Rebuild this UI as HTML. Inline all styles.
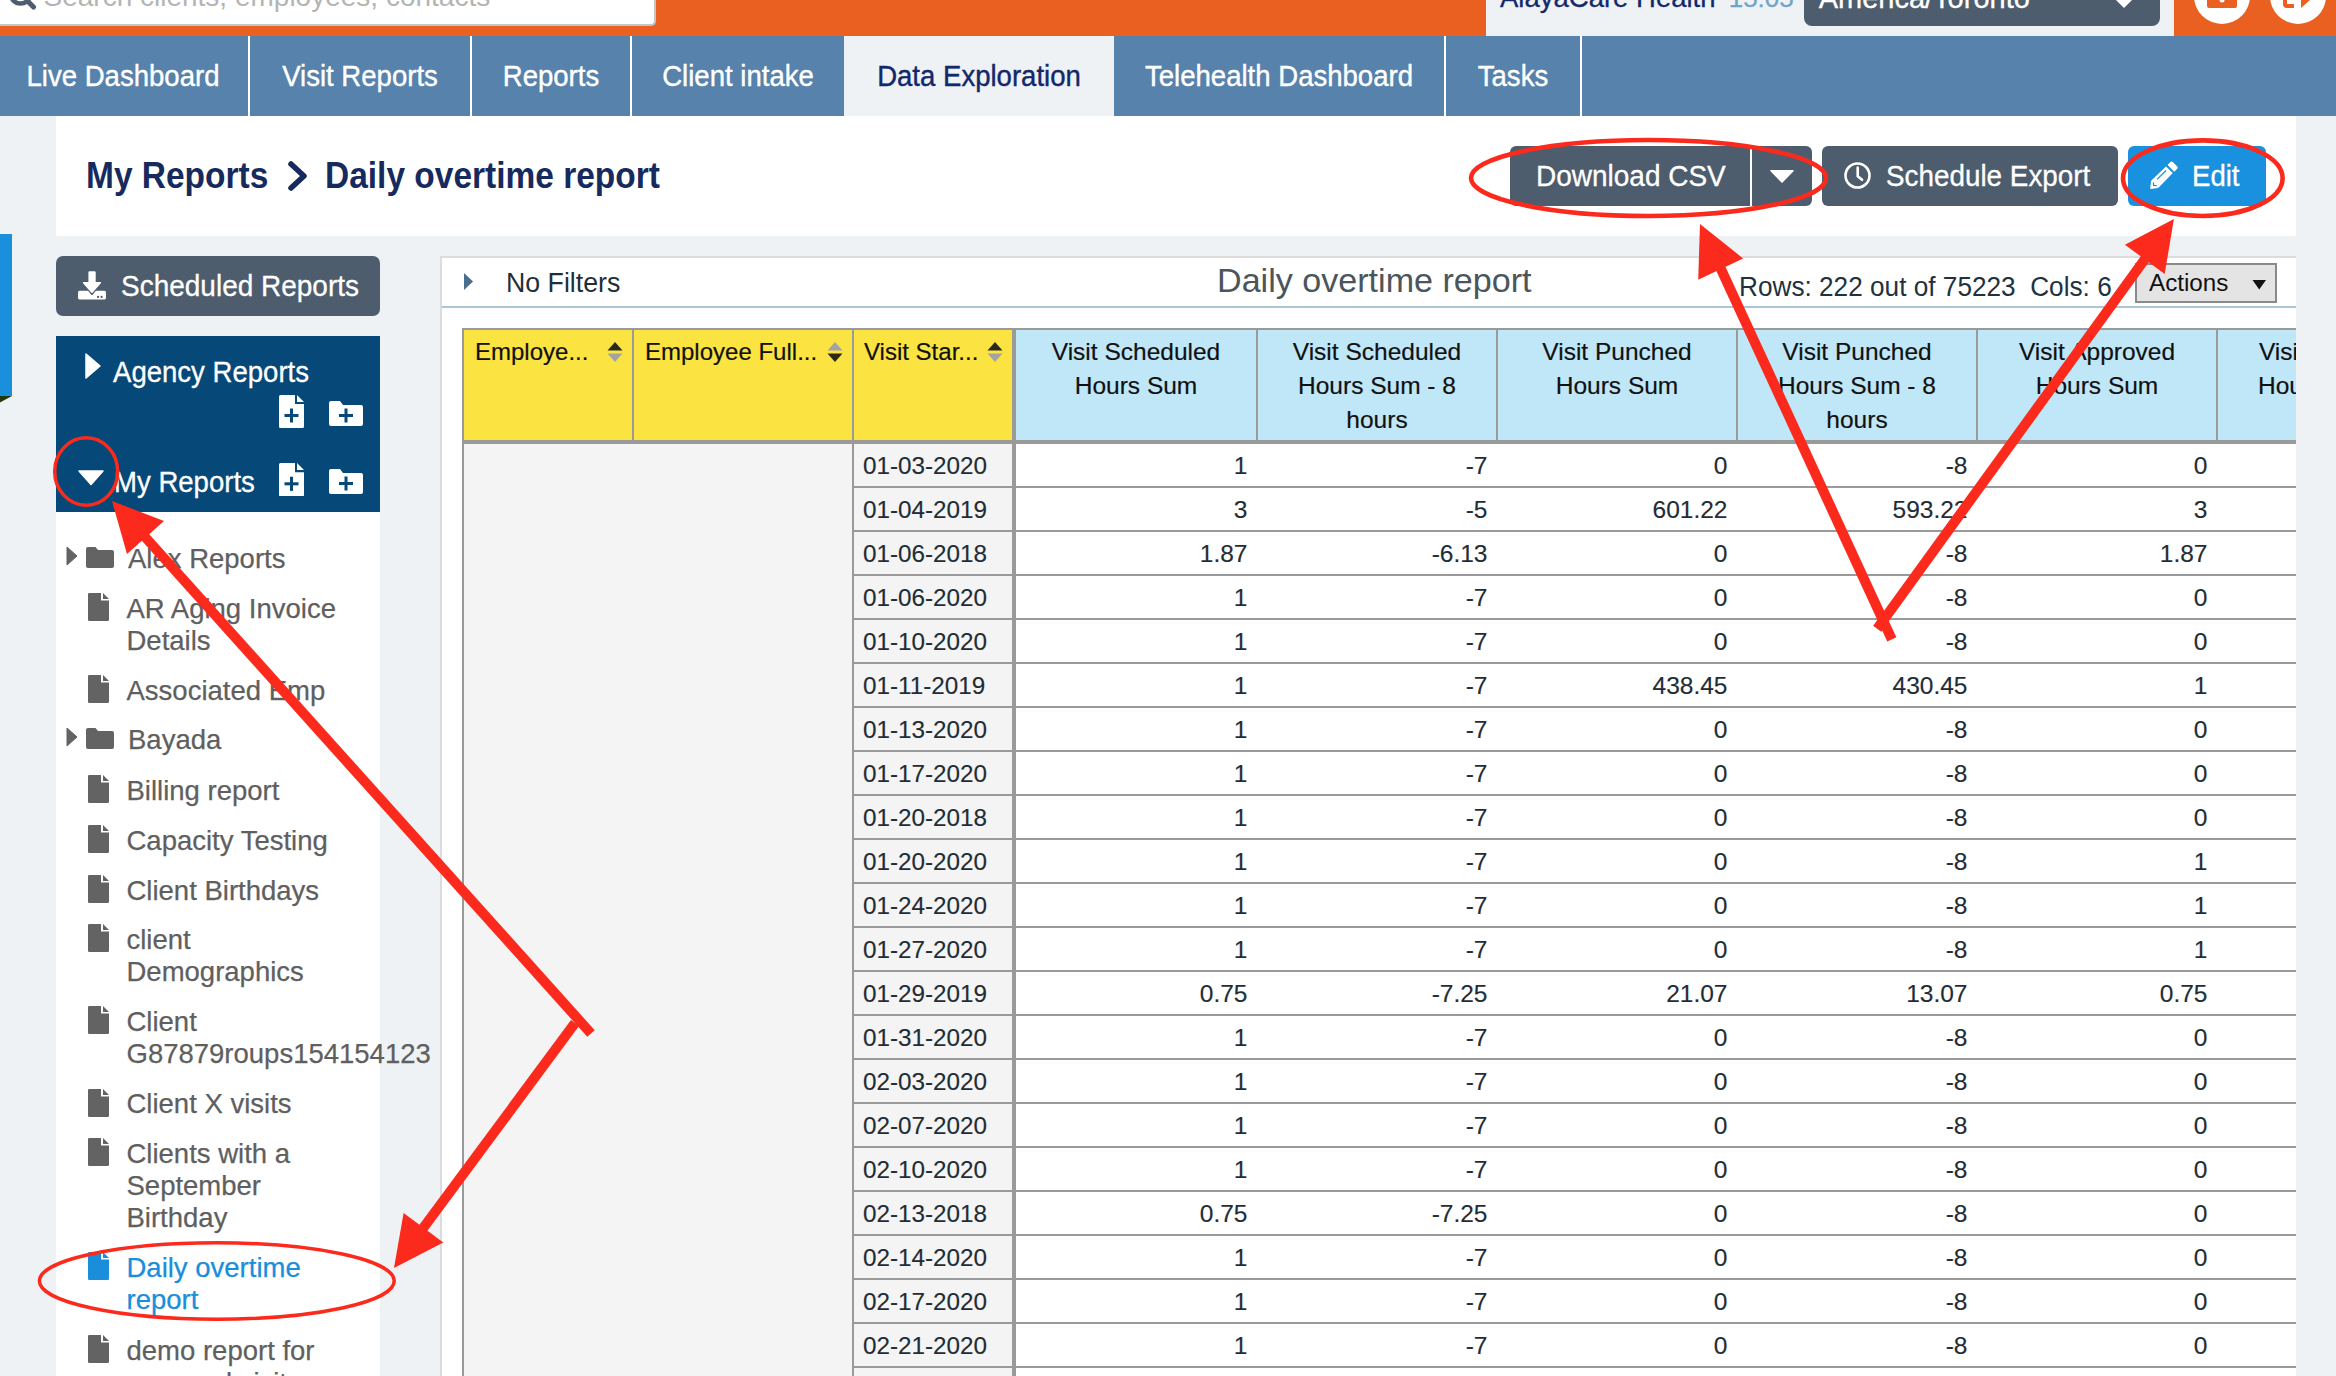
<!DOCTYPE html>
<html><head><meta charset="utf-8"><title>Daily overtime report</title>
<style>
html,body{margin:0;padding:0;}
body{width:2336px;height:1376px;overflow:hidden;position:relative;background:#eef2f5;font-family:"Liberation Sans",sans-serif;}
body div, body svg{position:absolute;}
body div div, body div svg{position:absolute;}
</style></head><body>
<div style="left:0px;top:0px;width:2336px;height:36px;background:#ea6020;"></div>
<div style="left:0;top:-12px;width:654px;height:35.5px;background:#fff;border:2px solid #c3c6c9;border-top:none;border-left:none;border-radius:0 0 5px 0;"></div>
<svg style="left:0;top:0" width="60" height="30"><circle cx="20.5" cy="-6.5" r="10" fill="none" stroke="#4e5d6e" stroke-width="4.5"/><line x1="27.5" y1="1" x2="33.5" y2="7" stroke="#4e5d6e" stroke-width="5" stroke-linecap="round"/></svg>
<div style="top:-17.30px;font-size:28px;line-height:28px;color:#b4b4b4;font-weight:400;white-space:pre;left:43.5px;">Search clients, employees, contacts</div>
<div style="left:1486px;top:0px;width:688px;height:36px;background:#eef2f5;"></div>
<div style="top:-15.88px;font-size:27.5px;line-height:27.5px;color:#13286a;font-weight:400;white-space:pre;left:1500px;-webkit-text-stroke:0.3px">AlayaCare Health</div>
<div style="top:-14.60px;font-size:26px;line-height:26px;color:#70a4c9;font-weight:400;white-space:pre;left:1728.7px;-webkit-text-stroke:0.3px">15:05</div>
<div style="left:1804px;top:-10px;width:356px;height:36px;background:#4e5d6e;border-radius:0 0 8px 8px;"></div>
<div style="top:-16.15px;font-size:29px;line-height:29px;color:#fff;font-weight:400;white-space:pre;left:1818.7px;-webkit-text-stroke:0.3px">America/Toronto</div>
<svg style="left:2110px;top:0" width="30" height="12"><polygon points="2,-4 14,8 26,-4 22,-8 14,0 6,-8" fill="#fff"/></svg>
<svg style="left:2180px;top:0" width="156" height="36"><circle cx="42" cy="-4" r="28" fill="#fff"/><circle cx="118" cy="-4" r="28" fill="#fff"/><rect x="27" y="-12" width="30" height="20" rx="2" fill="#ea6020"/><circle cx="42" cy="0" r="2.5" fill="#fff"/><path d="M103 -6 L103 4 Q103 8 107 8 L114 8 L114 4 L107 4 L107 -6 Z" fill="#ea6020"/><path d="M112 -10 L130 -10 L130 0 L121 8 L121 0 L112 0 Z" fill="#ea6020"/></svg>
<div style="left:0px;top:36px;width:2336px;height:80px;background:#5682ab;"></div>
<div style="left:248px;top:36px;width:2px;height:80px;background:#fff;"></div>
<div style="left:470px;top:36px;width:2px;height:80px;background:#fff;"></div>
<div style="left:630px;top:36px;width:2px;height:80px;background:#fff;"></div>
<div style="left:1444px;top:36px;width:2px;height:80px;background:#fff;"></div>
<div style="left:1580px;top:36px;width:2px;height:80px;background:#fff;"></div>
<div style="left:844px;top:36px;width:270px;height:80px;background:#eef2f5;"></div>
<div style="top:62.35px;font-size:29px;line-height:29px;color:#fff;font-weight:400;white-space:pre;left:-277.5px;width:800px;text-align:center;transform:scaleX(0.95);transform-origin:center top;-webkit-text-stroke:0.4px">Live Dashboard</div>
<div style="top:62.35px;font-size:29px;line-height:29px;color:#fff;font-weight:400;white-space:pre;left:-40px;width:800px;text-align:center;transform:scaleX(0.95);transform-origin:center top;-webkit-text-stroke:0.4px">Visit Reports</div>
<div style="top:62.35px;font-size:29px;line-height:29px;color:#fff;font-weight:400;white-space:pre;left:151px;width:800px;text-align:center;transform:scaleX(0.95);transform-origin:center top;-webkit-text-stroke:0.4px">Reports</div>
<div style="top:62.35px;font-size:29px;line-height:29px;color:#fff;font-weight:400;white-space:pre;left:338px;width:800px;text-align:center;transform:scaleX(0.95);transform-origin:center top;-webkit-text-stroke:0.4px">Client intake</div>
<div style="top:62.35px;font-size:29px;line-height:29px;color:#13286a;font-weight:400;white-space:pre;left:579px;width:800px;text-align:center;transform:scaleX(0.95);transform-origin:center top;-webkit-text-stroke:0.4px">Data Exploration</div>
<div style="top:62.35px;font-size:29px;line-height:29px;color:#fff;font-weight:400;white-space:pre;left:879px;width:800px;text-align:center;transform:scaleX(0.95);transform-origin:center top;-webkit-text-stroke:0.4px">Telehealth Dashboard</div>
<div style="top:62.35px;font-size:29px;line-height:29px;color:#fff;font-weight:400;white-space:pre;left:1113px;width:800px;text-align:center;transform:scaleX(0.95);transform-origin:center top;-webkit-text-stroke:0.4px">Tasks</div>
<div style="left:56px;top:116px;width:2240px;height:120px;background:#fff;"></div>
<div style="top:158.40px;font-size:36px;line-height:36px;color:#172a5e;font-weight:700;white-space:pre;left:85.8px;transform:scaleX(0.93);transform-origin:left top;">My Reports</div>
<svg style="left:280px;top:155px" width="40" height="45"><polyline points="11,9 24,21 11,33" fill="none" stroke="#172a5e" stroke-width="5.5" stroke-linecap="round" stroke-linejoin="round"/></svg>
<div style="top:158.40px;font-size:36px;line-height:36px;color:#172a5e;font-weight:700;white-space:pre;left:325px;transform:scaleX(0.93);transform-origin:left top;">Daily overtime report</div>
<div style="left:1510px;top:146px;width:302px;height:60px;background:#4e5d6e;border-radius:6px;"></div>
<div style="left:1750px;top:148px;width:2px;height:58px;background:#fff;"></div>
<div style="top:162.05px;font-size:29px;line-height:29px;color:#fff;font-weight:400;white-space:pre;left:1535.5px;transform:scaleX(0.965);transform-origin:left top;-webkit-text-stroke:0.3px">Download CSV</div>
<svg style="left:1765px;top:165px" width="34" height="24"><polygon points="6,5.8 28,5.8 17,17" fill="#fff" stroke="#fff" stroke-width="1.6" stroke-linejoin="round"/></svg>
<div style="left:1822px;top:146px;width:296px;height:60px;background:#4e5d6e;border-radius:6px;"></div>
<svg style="left:1840px;top:158px" width="36" height="36"><circle cx="17.5" cy="17.5" r="12" fill="none" stroke="#fff" stroke-width="2.6"/><polyline points="17.7,9.6 17.7,18.2 22,21.8" fill="none" stroke="#fff" stroke-width="2.6" stroke-linecap="round" stroke-linejoin="round"/></svg>
<div style="top:162.05px;font-size:29px;line-height:29px;color:#fff;font-weight:400;white-space:pre;left:1886px;transform:scaleX(0.96);transform-origin:left top;-webkit-text-stroke:0.3px">Schedule Export</div>
<div style="left:2128px;top:146px;width:138px;height:60px;background:#1a91de;border-radius:6px;"></div>
<svg style="left:2149.7px;top:161.3px" width="30" height="30"><path d="M16 5.6 L22.8 12.1 L8.7 26.6 Q8.2 27 7.6 27.1 L1 28 Q0.1 28 0.2 27.1 L1.1 20.3 Q1.2 19.7 1.6 19.3 Z" fill="#fff"/><path d="M17.6 3.9 L20.4 1.1 Q21.6 -0.1 22.8 1.1 L27.2 5.4 Q28.3 6.6 27.2 7.8 L24.3 10.7 Z" fill="#fff"/><line x1="7" y1="18.4" x2="16" y2="9.5" stroke="#1a91de" stroke-width="1.3"/><polyline points="3.4,21.4 3.6,24.4 6.7,24.6" fill="none" stroke="#1a91de" stroke-width="1.3"/></svg>
<div style="top:162.05px;font-size:29px;line-height:29px;color:#fff;font-weight:400;white-space:pre;left:2191.5px;transform:scaleX(0.95);transform-origin:left top;-webkit-text-stroke:0.3px">Edit</div>
<div style="left:0px;top:234px;width:12px;height:162px;background:#1a8fdc;"></div>
<svg style="left:0;top:396px" width="14" height="12"><polygon points="0,0 12,0 0,6.5" fill="#1f3812"/></svg>
<div style="left:56px;top:256px;width:324px;height:60px;background:#4e5d6e;border-radius:7px;"></div>
<svg style="left:76px;top:268px" width="34" height="36"><rect x="2" y="22.7" width="28" height="8.7" rx="1.6" fill="#fff"/><polygon points="4.6,12.9 27.3,12.9 15.95,26.9" fill="#4e5d6e" stroke="#4e5d6e" stroke-width="1" stroke-linejoin="round"/><rect x="12.4" y="3.2" width="7.3" height="12" rx="1.2" fill="#fff"/><polygon points="7.6,14.8 24.3,14.8 15.95,24.2" fill="#fff" stroke="#fff" stroke-width="1.6" stroke-linejoin="round"/><circle cx="22.1" cy="28.9" r="1.1" fill="#4e5d6e"/><circle cx="25.6" cy="28.9" r="1.1" fill="#4e5d6e"/></svg>
<div style="top:272.35px;font-size:29px;line-height:29px;color:#fff;font-weight:400;white-space:pre;left:120.5px;transform:scaleX(0.965);transform-origin:left top;-webkit-text-stroke:0.3px">Scheduled Reports</div>
<div style="left:56px;top:336px;width:324px;height:176px;background:#064877;"></div>
<svg style="left:84px;top:352px" width="20" height="30"><polygon points="2,2 16,14 2,26" fill="#fff" stroke="#fff" stroke-width="1.5" stroke-linejoin="round"/></svg>
<div style="top:357.95px;font-size:29px;line-height:29px;color:#fff;font-weight:400;white-space:pre;left:113px;transform:scaleX(0.95);transform-origin:left top;-webkit-text-stroke:0.3px">Agency Reports</div>
<svg style="left:279px;top:395px" width="25" height="33" viewBox="0 0 25 33" preserveAspectRatio="none"><path d="M1.5 0 L16 0 L16 9 L25 9 L25 31.5 Q25 33 23.5 33 L1.5 33 Q0 33 0 31.5 L0 1.5 Q0 0 1.5 0 Z" fill="#fff"/><polygon points="18,0 25,7 18,7" fill="#fff"/><rect x="5.5" y="19" width="14" height="3" fill="#064877"/><rect x="11" y="13.5" width="3" height="14" fill="#064877"/></svg>
<svg style="left:329px;top:401px" width="34" height="25" viewBox="0 0 34 25" preserveAspectRatio="none"><path d="M2 0 L11 0 L14 4 L32 4 Q34 4 34 6 L34 23 Q34 25 32 25 L2 25 Q0 25 0 23 L0 2 Q0 0 2 0 Z" fill="#fff"/><rect x="10" y="13" width="14" height="3" fill="#064877"/><rect x="15.5" y="7.5" width="3" height="14" fill="#064877"/></svg>
<svg style="left:76px;top:468px" width="30" height="20"><polygon points="3,3 27,3 15,16.5" fill="#fff" stroke="#fff" stroke-width="1.5" stroke-linejoin="round"/></svg>
<div style="top:467.55px;font-size:29px;line-height:29px;color:#fff;font-weight:400;white-space:pre;left:114px;transform:scaleX(0.95);transform-origin:left top;-webkit-text-stroke:0.3px">My Reports</div>
<svg style="left:279px;top:462.5px" width="25" height="33.5" viewBox="0 0 25 33" preserveAspectRatio="none"><path d="M1.5 0 L16 0 L16 9 L25 9 L25 31.5 Q25 33 23.5 33 L1.5 33 Q0 33 0 31.5 L0 1.5 Q0 0 1.5 0 Z" fill="#fff"/><polygon points="18,0 25,7 18,7" fill="#fff"/><rect x="5.5" y="19" width="14" height="3" fill="#064877"/><rect x="11" y="13.5" width="3" height="14" fill="#064877"/></svg>
<svg style="left:329px;top:469px" width="34" height="25" viewBox="0 0 34 25" preserveAspectRatio="none"><path d="M2 0 L11 0 L14 4 L32 4 Q34 4 34 6 L34 23 Q34 25 32 25 L2 25 Q0 25 0 23 L0 2 Q0 0 2 0 Z" fill="#fff"/><rect x="10" y="13" width="14" height="3" fill="#064877"/><rect x="15.5" y="7.5" width="3" height="14" fill="#064877"/></svg>
<div style="left:56px;top:512px;width:324px;height:864px;background:#fff;"></div>
<svg style="left:66px;top:546px" width="14" height="22"><polygon points="1,1 11,10 1,19" fill="#636363" stroke="#636363" stroke-width="1" stroke-linejoin="round"/></svg>
<svg style="left:86px;top:547px" width="28" height="21" viewBox="0 0 28 21"><path d="M2 0 L9.5 0 L12 3 L26 3 Q28 3 28 5 L28 19 Q28 21 26 21 L2 21 Q0 21 0 19 L0 2 Q0 0 2 0 Z" fill="#636363"/></svg>
<div style="top:544.62px;font-size:27.5px;line-height:27.5px;color:#5f5f5f;font-weight:400;white-space:pre;left:128px;-webkit-text-stroke:0.25px">Alex Reports</div>
<svg style="left:88px;top:593px" width="21" height="28" viewBox="0 0 21 28"><path d="M1.2 0 L13 0 L13 7.5 L21 7.5 L21 26.8 Q21 28 19.8 28 L1.2 28 Q0 28 0 26.8 L0 1.2 Q0 0 1.2 0 Z" fill="#636363"/><polygon points="15,0 21,6 15,6" fill="#636363"/></svg>
<div style="top:594.62px;font-size:27.5px;line-height:27.5px;color:#5f5f5f;font-weight:400;white-space:pre;left:126.5px;-webkit-text-stroke:0.25px">AR Aging Invoice</div>
<div style="top:626.62px;font-size:27.5px;line-height:27.5px;color:#5f5f5f;font-weight:400;white-space:pre;left:126.5px;-webkit-text-stroke:0.25px">Details</div>
<svg style="left:88px;top:675px" width="21" height="28" viewBox="0 0 21 28"><path d="M1.2 0 L13 0 L13 7.5 L21 7.5 L21 26.8 Q21 28 19.8 28 L1.2 28 Q0 28 0 26.8 L0 1.2 Q0 0 1.2 0 Z" fill="#636363"/><polygon points="15,0 21,6 15,6" fill="#636363"/></svg>
<div style="top:676.62px;font-size:27.5px;line-height:27.5px;color:#5f5f5f;font-weight:400;white-space:pre;left:126.5px;-webkit-text-stroke:0.25px">Associated Emp</div>
<svg style="left:66px;top:727px" width="14" height="22"><polygon points="1,1 11,10 1,19" fill="#636363" stroke="#636363" stroke-width="1" stroke-linejoin="round"/></svg>
<svg style="left:86px;top:728px" width="28" height="21" viewBox="0 0 28 21"><path d="M2 0 L9.5 0 L12 3 L26 3 Q28 3 28 5 L28 19 Q28 21 26 21 L2 21 Q0 21 0 19 L0 2 Q0 0 2 0 Z" fill="#636363"/></svg>
<div style="top:725.62px;font-size:27.5px;line-height:27.5px;color:#5f5f5f;font-weight:400;white-space:pre;left:128px;-webkit-text-stroke:0.25px">Bayada</div>
<svg style="left:88px;top:775px" width="21" height="28" viewBox="0 0 21 28"><path d="M1.2 0 L13 0 L13 7.5 L21 7.5 L21 26.8 Q21 28 19.8 28 L1.2 28 Q0 28 0 26.8 L0 1.2 Q0 0 1.2 0 Z" fill="#636363"/><polygon points="15,0 21,6 15,6" fill="#636363"/></svg>
<div style="top:776.62px;font-size:27.5px;line-height:27.5px;color:#5f5f5f;font-weight:400;white-space:pre;left:126.5px;-webkit-text-stroke:0.25px">Billing report</div>
<svg style="left:88px;top:825px" width="21" height="28" viewBox="0 0 21 28"><path d="M1.2 0 L13 0 L13 7.5 L21 7.5 L21 26.8 Q21 28 19.8 28 L1.2 28 Q0 28 0 26.8 L0 1.2 Q0 0 1.2 0 Z" fill="#636363"/><polygon points="15,0 21,6 15,6" fill="#636363"/></svg>
<div style="top:826.62px;font-size:27.5px;line-height:27.5px;color:#5f5f5f;font-weight:400;white-space:pre;left:126.5px;-webkit-text-stroke:0.25px">Capacity Testing</div>
<svg style="left:88px;top:875px" width="21" height="28" viewBox="0 0 21 28"><path d="M1.2 0 L13 0 L13 7.5 L21 7.5 L21 26.8 Q21 28 19.8 28 L1.2 28 Q0 28 0 26.8 L0 1.2 Q0 0 1.2 0 Z" fill="#636363"/><polygon points="15,0 21,6 15,6" fill="#636363"/></svg>
<div style="top:876.62px;font-size:27.5px;line-height:27.5px;color:#5f5f5f;font-weight:400;white-space:pre;left:126.5px;-webkit-text-stroke:0.25px">Client Birthdays</div>
<svg style="left:88px;top:924px" width="21" height="28" viewBox="0 0 21 28"><path d="M1.2 0 L13 0 L13 7.5 L21 7.5 L21 26.8 Q21 28 19.8 28 L1.2 28 Q0 28 0 26.8 L0 1.2 Q0 0 1.2 0 Z" fill="#636363"/><polygon points="15,0 21,6 15,6" fill="#636363"/></svg>
<div style="top:925.62px;font-size:27.5px;line-height:27.5px;color:#5f5f5f;font-weight:400;white-space:pre;left:126.5px;-webkit-text-stroke:0.25px">client</div>
<div style="top:957.62px;font-size:27.5px;line-height:27.5px;color:#5f5f5f;font-weight:400;white-space:pre;left:126.5px;-webkit-text-stroke:0.25px">Demographics</div>
<svg style="left:88px;top:1006px" width="21" height="28" viewBox="0 0 21 28"><path d="M1.2 0 L13 0 L13 7.5 L21 7.5 L21 26.8 Q21 28 19.8 28 L1.2 28 Q0 28 0 26.8 L0 1.2 Q0 0 1.2 0 Z" fill="#636363"/><polygon points="15,0 21,6 15,6" fill="#636363"/></svg>
<div style="top:1007.62px;font-size:27.5px;line-height:27.5px;color:#5f5f5f;font-weight:400;white-space:pre;left:126.5px;-webkit-text-stroke:0.25px">Client</div>
<div style="top:1039.62px;font-size:27.5px;line-height:27.5px;color:#5f5f5f;font-weight:400;white-space:pre;left:126.5px;-webkit-text-stroke:0.25px">G87879roups154154123</div>
<svg style="left:88px;top:1088.5px" width="21" height="28" viewBox="0 0 21 28"><path d="M1.2 0 L13 0 L13 7.5 L21 7.5 L21 26.8 Q21 28 19.8 28 L1.2 28 Q0 28 0 26.8 L0 1.2 Q0 0 1.2 0 Z" fill="#636363"/><polygon points="15,0 21,6 15,6" fill="#636363"/></svg>
<div style="top:1090.12px;font-size:27.5px;line-height:27.5px;color:#5f5f5f;font-weight:400;white-space:pre;left:126.5px;-webkit-text-stroke:0.25px">Client X visits</div>
<svg style="left:88px;top:1138px" width="21" height="28" viewBox="0 0 21 28"><path d="M1.2 0 L13 0 L13 7.5 L21 7.5 L21 26.8 Q21 28 19.8 28 L1.2 28 Q0 28 0 26.8 L0 1.2 Q0 0 1.2 0 Z" fill="#636363"/><polygon points="15,0 21,6 15,6" fill="#636363"/></svg>
<div style="top:1139.62px;font-size:27.5px;line-height:27.5px;color:#5f5f5f;font-weight:400;white-space:pre;left:126.5px;-webkit-text-stroke:0.25px">Clients with a</div>
<div style="top:1171.62px;font-size:27.5px;line-height:27.5px;color:#5f5f5f;font-weight:400;white-space:pre;left:126.5px;-webkit-text-stroke:0.25px">September</div>
<div style="top:1203.62px;font-size:27.5px;line-height:27.5px;color:#5f5f5f;font-weight:400;white-space:pre;left:126.5px;-webkit-text-stroke:0.25px">Birthday</div>
<svg style="left:88px;top:1252px" width="21" height="28" viewBox="0 0 21 28"><path d="M1.2 0 L13 0 L13 7.5 L21 7.5 L21 26.8 Q21 28 19.8 28 L1.2 28 Q0 28 0 26.8 L0 1.2 Q0 0 1.2 0 Z" fill="#1a8edb"/><polygon points="15,0 21,6 15,6" fill="#1a8edb"/></svg>
<div style="top:1253.62px;font-size:27.5px;line-height:27.5px;color:#1a8edb;font-weight:400;white-space:pre;left:126.5px;-webkit-text-stroke:0.25px">Daily overtime</div>
<div style="top:1285.62px;font-size:27.5px;line-height:27.5px;color:#1a8edb;font-weight:400;white-space:pre;left:126.5px;-webkit-text-stroke:0.25px">report</div>
<svg style="left:88px;top:1335px" width="21" height="28" viewBox="0 0 21 28"><path d="M1.2 0 L13 0 L13 7.5 L21 7.5 L21 26.8 Q21 28 19.8 28 L1.2 28 Q0 28 0 26.8 L0 1.2 Q0 0 1.2 0 Z" fill="#636363"/><polygon points="15,0 21,6 15,6" fill="#636363"/></svg>
<div style="top:1336.62px;font-size:27.5px;line-height:27.5px;color:#5f5f5f;font-weight:400;white-space:pre;left:126.5px;-webkit-text-stroke:0.25px">demo report for</div>
<div style="top:1368.62px;font-size:27.5px;line-height:27.5px;color:#5f5f5f;font-weight:400;white-space:pre;left:126.5px;-webkit-text-stroke:0.25px">                 </div>
<div style="top:1368.62px;font-size:27.5px;line-height:27.5px;color:#5f5f5f;font-weight:400;white-space:pre;left:126.5px;-webkit-text-stroke:0.25px">personal visits</div>
<div style="left:440px;top:256px;width:1856px;height:1200px;background:#fff;border-left:2px solid #dcdcdc;border-top:2px solid #dcdcdc;box-sizing:border-box;"></div>
<svg style="left:460px;top:270px" width="20" height="24"><polygon points="4,3 13,11.5 4,20" fill="#4a6f8e"/></svg>
<div style="top:270.05px;font-size:27px;line-height:27px;color:#1f2f3a;font-weight:400;white-space:pre;left:505.5px;transform:scaleX(0.99);transform-origin:left top;">No Filters</div>
<div style="top:262.60px;font-size:34px;line-height:34px;color:#4a555c;font-weight:400;white-space:pre;left:1216.5px;transform:scaleX(1.003);transform-origin:left top;">Daily overtime report</div>
<div style="top:273.65px;font-size:27px;line-height:27px;color:#22323c;font-weight:400;white-space:pre;left:1739px;transform:scaleX(0.97);transform-origin:left top;">Rows: 222 out of 75223  Cols: 6</div>
<div style="left:2134.5px;top:262.5px;width:142.5px;height:40px;box-sizing:border-box;background:#e4e4e4;border:2px solid #8a8a8a;"></div>
<div style="top:271.52px;font-size:23.5px;line-height:23.5px;color:#111;font-weight:400;white-space:pre;left:2148.5px;transform:scaleX(1.03);transform-origin:left top;">Actions</div>
<svg style="left:2248px;top:276px" width="24" height="18"><polygon points="4.5,4 18,4 11.2,13.5" fill="#111"/></svg>
<div style="left:442px;top:306px;width:1854px;height:2px;background:#a9c5d9;"></div>
<div style="left:0;top:0;width:2296px;height:1376px;overflow:hidden;">
<div style="left:462px;top:328px;width:2034px;height:2px;background:#9a9a9a;"></div>
<div style="left:462px;top:328px;width:2px;height:1048px;background:#9a9a9a;"></div>
<div style="left:464px;top:330px;width:548px;height:110px;background:#fbe342;"></div>
<div style="left:1016px;top:330px;width:1480px;height:110px;background:#c0e7f7;"></div>
<div style="left:632px;top:330px;width:2px;height:1046px;background:#9a9a9a;"></div>
<div style="left:852px;top:330px;width:2px;height:1046px;background:#9a9a9a;"></div>
<div style="left:1012px;top:330px;width:4px;height:1046px;background:#9a9a9a;"></div>
<div style="left:1256px;top:330px;width:2px;height:110px;background:#9a9a9a;"></div>
<div style="left:1496px;top:330px;width:2px;height:110px;background:#9a9a9a;"></div>
<div style="left:1736px;top:330px;width:2px;height:110px;background:#9a9a9a;"></div>
<div style="left:1976px;top:330px;width:2px;height:110px;background:#9a9a9a;"></div>
<div style="left:2216px;top:330px;width:2px;height:110px;background:#9a9a9a;"></div>
<div style="left:462px;top:440px;width:2100px;height:4px;background:#9a9a9a;"></div>
<div style="left:464px;top:444px;width:388px;height:932px;background:#f4f4f4;"></div>
<div style="left:854px;top:444px;width:158px;height:932px;background:#f4f4f4;"></div>
<div style="left:1016px;top:444px;width:1500px;height:932px;background:#fff;"></div>
<div style="top:339.98px;font-size:24.5px;line-height:24.5px;color:#111;font-weight:400;white-space:pre;left:475px;transform:scaleX(0.98);transform-origin:left top;-webkit-text-stroke:0.2px">Employe...</div>
<svg style="left:607px;top:341px" width="16" height="22"><polygon points="0.5,9.5 15.5,9.5 8,1" fill="#2b2a1a"/><polygon points="0.5,12.5 15.5,12.5 8,21" fill="#a3a3a3"/></svg>
<div style="top:339.98px;font-size:24.5px;line-height:24.5px;color:#111;font-weight:400;white-space:pre;left:645px;transform:scaleX(0.98);transform-origin:left top;-webkit-text-stroke:0.2px">Employee Full...</div>
<svg style="left:827px;top:341px" width="16" height="22"><polygon points="0.5,9.5 15.5,9.5 8,1" fill="#a3a3a3"/><polygon points="0.5,12.5 15.5,12.5 8,21" fill="#2b2a1a"/></svg>
<div style="top:339.98px;font-size:24.5px;line-height:24.5px;color:#111;font-weight:400;white-space:pre;left:863.6px;transform:scaleX(0.98);transform-origin:left top;-webkit-text-stroke:0.2px">Visit Star...</div>
<svg style="left:987px;top:341px" width="16" height="22"><polygon points="0.5,9.5 15.5,9.5 8,1" fill="#2b2a1a"/><polygon points="0.5,12.5 15.5,12.5 8,21" fill="#a3a3a3"/></svg>
<div style="top:340.18px;font-size:24.5px;line-height:24.5px;color:#111;font-weight:400;white-space:pre;left:736px;width:800px;text-align:center;-webkit-text-stroke:0.2px">Visit Scheduled</div>
<div style="top:373.88px;font-size:24.5px;line-height:24.5px;color:#111;font-weight:400;white-space:pre;left:736px;width:800px;text-align:center;-webkit-text-stroke:0.2px">Hours Sum</div>
<div style="top:340.18px;font-size:24.5px;line-height:24.5px;color:#111;font-weight:400;white-space:pre;left:977px;width:800px;text-align:center;-webkit-text-stroke:0.2px">Visit Scheduled</div>
<div style="top:373.88px;font-size:24.5px;line-height:24.5px;color:#111;font-weight:400;white-space:pre;left:977px;width:800px;text-align:center;-webkit-text-stroke:0.2px">Hours Sum - 8</div>
<div style="top:407.57px;font-size:24.5px;line-height:24.5px;color:#111;font-weight:400;white-space:pre;left:977px;width:800px;text-align:center;-webkit-text-stroke:0.2px">hours</div>
<div style="top:340.18px;font-size:24.5px;line-height:24.5px;color:#111;font-weight:400;white-space:pre;left:1217px;width:800px;text-align:center;-webkit-text-stroke:0.2px">Visit Punched</div>
<div style="top:373.88px;font-size:24.5px;line-height:24.5px;color:#111;font-weight:400;white-space:pre;left:1217px;width:800px;text-align:center;-webkit-text-stroke:0.2px">Hours Sum</div>
<div style="top:340.18px;font-size:24.5px;line-height:24.5px;color:#111;font-weight:400;white-space:pre;left:1457px;width:800px;text-align:center;-webkit-text-stroke:0.2px">Visit Punched</div>
<div style="top:373.88px;font-size:24.5px;line-height:24.5px;color:#111;font-weight:400;white-space:pre;left:1457px;width:800px;text-align:center;-webkit-text-stroke:0.2px">Hours Sum - 8</div>
<div style="top:407.57px;font-size:24.5px;line-height:24.5px;color:#111;font-weight:400;white-space:pre;left:1457px;width:800px;text-align:center;-webkit-text-stroke:0.2px">hours</div>
<div style="top:340.18px;font-size:24.5px;line-height:24.5px;color:#111;font-weight:400;white-space:pre;left:1697px;width:800px;text-align:center;-webkit-text-stroke:0.2px">Visit Approved</div>
<div style="top:373.88px;font-size:24.5px;line-height:24.5px;color:#111;font-weight:400;white-space:pre;left:1697px;width:800px;text-align:center;-webkit-text-stroke:0.2px">Hours Sum</div>
<div style="top:340.18px;font-size:24.5px;line-height:24.5px;color:#111;font-weight:400;white-space:pre;left:1937px;width:800px;text-align:center;-webkit-text-stroke:0.2px">Visit Approved</div>
<div style="top:373.88px;font-size:24.5px;line-height:24.5px;color:#111;font-weight:400;white-space:pre;left:1937px;width:800px;text-align:center;-webkit-text-stroke:0.2px">Hours Sum - 8</div>
<div style="top:407.57px;font-size:24.5px;line-height:24.5px;color:#111;font-weight:400;white-space:pre;left:1937px;width:800px;text-align:center;-webkit-text-stroke:0.2px">hours</div>
<div style="left:854px;top:486px;width:2000px;height:2px;background:#9a9a9a;"></div>
<div style="top:453.68px;font-size:24.5px;line-height:24.5px;color:#1f2d36;font-weight:400;white-space:pre;left:862.5px;transform:scaleX(0.99);transform-origin:left top;-webkit-text-stroke:0.15px">01-03-2020</div>
<div style="top:453.68px;font-size:24.5px;line-height:24.5px;color:#1f2d36;font-weight:400;white-space:pre;left:647.5px;width:600px;text-align:right;-webkit-text-stroke:0.15px">1</div>
<div style="top:453.68px;font-size:24.5px;line-height:24.5px;color:#1f2d36;font-weight:400;white-space:pre;left:887.5px;width:600px;text-align:right;-webkit-text-stroke:0.15px">-7</div>
<div style="top:453.68px;font-size:24.5px;line-height:24.5px;color:#1f2d36;font-weight:400;white-space:pre;left:1127.5px;width:600px;text-align:right;-webkit-text-stroke:0.15px">0</div>
<div style="top:453.68px;font-size:24.5px;line-height:24.5px;color:#1f2d36;font-weight:400;white-space:pre;left:1367.5px;width:600px;text-align:right;-webkit-text-stroke:0.15px">-8</div>
<div style="top:453.68px;font-size:24.5px;line-height:24.5px;color:#1f2d36;font-weight:400;white-space:pre;left:1607.5px;width:600px;text-align:right;-webkit-text-stroke:0.15px">0</div>
<div style="left:854px;top:530px;width:2000px;height:2px;background:#9a9a9a;"></div>
<div style="top:497.68px;font-size:24.5px;line-height:24.5px;color:#1f2d36;font-weight:400;white-space:pre;left:862.5px;transform:scaleX(0.99);transform-origin:left top;-webkit-text-stroke:0.15px">01-04-2019</div>
<div style="top:497.68px;font-size:24.5px;line-height:24.5px;color:#1f2d36;font-weight:400;white-space:pre;left:647.5px;width:600px;text-align:right;-webkit-text-stroke:0.15px">3</div>
<div style="top:497.68px;font-size:24.5px;line-height:24.5px;color:#1f2d36;font-weight:400;white-space:pre;left:887.5px;width:600px;text-align:right;-webkit-text-stroke:0.15px">-5</div>
<div style="top:497.68px;font-size:24.5px;line-height:24.5px;color:#1f2d36;font-weight:400;white-space:pre;left:1127.5px;width:600px;text-align:right;-webkit-text-stroke:0.15px">601.22</div>
<div style="top:497.68px;font-size:24.5px;line-height:24.5px;color:#1f2d36;font-weight:400;white-space:pre;left:1367.5px;width:600px;text-align:right;-webkit-text-stroke:0.15px">593.22</div>
<div style="top:497.68px;font-size:24.5px;line-height:24.5px;color:#1f2d36;font-weight:400;white-space:pre;left:1607.5px;width:600px;text-align:right;-webkit-text-stroke:0.15px">3</div>
<div style="left:854px;top:574px;width:2000px;height:2px;background:#9a9a9a;"></div>
<div style="top:541.67px;font-size:24.5px;line-height:24.5px;color:#1f2d36;font-weight:400;white-space:pre;left:862.5px;transform:scaleX(0.99);transform-origin:left top;-webkit-text-stroke:0.15px">01-06-2018</div>
<div style="top:541.67px;font-size:24.5px;line-height:24.5px;color:#1f2d36;font-weight:400;white-space:pre;left:647.5px;width:600px;text-align:right;-webkit-text-stroke:0.15px">1.87</div>
<div style="top:541.67px;font-size:24.5px;line-height:24.5px;color:#1f2d36;font-weight:400;white-space:pre;left:887.5px;width:600px;text-align:right;-webkit-text-stroke:0.15px">-6.13</div>
<div style="top:541.67px;font-size:24.5px;line-height:24.5px;color:#1f2d36;font-weight:400;white-space:pre;left:1127.5px;width:600px;text-align:right;-webkit-text-stroke:0.15px">0</div>
<div style="top:541.67px;font-size:24.5px;line-height:24.5px;color:#1f2d36;font-weight:400;white-space:pre;left:1367.5px;width:600px;text-align:right;-webkit-text-stroke:0.15px">-8</div>
<div style="top:541.67px;font-size:24.5px;line-height:24.5px;color:#1f2d36;font-weight:400;white-space:pre;left:1607.5px;width:600px;text-align:right;-webkit-text-stroke:0.15px">1.87</div>
<div style="left:854px;top:618px;width:2000px;height:2px;background:#9a9a9a;"></div>
<div style="top:585.67px;font-size:24.5px;line-height:24.5px;color:#1f2d36;font-weight:400;white-space:pre;left:862.5px;transform:scaleX(0.99);transform-origin:left top;-webkit-text-stroke:0.15px">01-06-2020</div>
<div style="top:585.67px;font-size:24.5px;line-height:24.5px;color:#1f2d36;font-weight:400;white-space:pre;left:647.5px;width:600px;text-align:right;-webkit-text-stroke:0.15px">1</div>
<div style="top:585.67px;font-size:24.5px;line-height:24.5px;color:#1f2d36;font-weight:400;white-space:pre;left:887.5px;width:600px;text-align:right;-webkit-text-stroke:0.15px">-7</div>
<div style="top:585.67px;font-size:24.5px;line-height:24.5px;color:#1f2d36;font-weight:400;white-space:pre;left:1127.5px;width:600px;text-align:right;-webkit-text-stroke:0.15px">0</div>
<div style="top:585.67px;font-size:24.5px;line-height:24.5px;color:#1f2d36;font-weight:400;white-space:pre;left:1367.5px;width:600px;text-align:right;-webkit-text-stroke:0.15px">-8</div>
<div style="top:585.67px;font-size:24.5px;line-height:24.5px;color:#1f2d36;font-weight:400;white-space:pre;left:1607.5px;width:600px;text-align:right;-webkit-text-stroke:0.15px">0</div>
<div style="left:854px;top:662px;width:2000px;height:2px;background:#9a9a9a;"></div>
<div style="top:629.67px;font-size:24.5px;line-height:24.5px;color:#1f2d36;font-weight:400;white-space:pre;left:862.5px;transform:scaleX(0.99);transform-origin:left top;-webkit-text-stroke:0.15px">01-10-2020</div>
<div style="top:629.67px;font-size:24.5px;line-height:24.5px;color:#1f2d36;font-weight:400;white-space:pre;left:647.5px;width:600px;text-align:right;-webkit-text-stroke:0.15px">1</div>
<div style="top:629.67px;font-size:24.5px;line-height:24.5px;color:#1f2d36;font-weight:400;white-space:pre;left:887.5px;width:600px;text-align:right;-webkit-text-stroke:0.15px">-7</div>
<div style="top:629.67px;font-size:24.5px;line-height:24.5px;color:#1f2d36;font-weight:400;white-space:pre;left:1127.5px;width:600px;text-align:right;-webkit-text-stroke:0.15px">0</div>
<div style="top:629.67px;font-size:24.5px;line-height:24.5px;color:#1f2d36;font-weight:400;white-space:pre;left:1367.5px;width:600px;text-align:right;-webkit-text-stroke:0.15px">-8</div>
<div style="top:629.67px;font-size:24.5px;line-height:24.5px;color:#1f2d36;font-weight:400;white-space:pre;left:1607.5px;width:600px;text-align:right;-webkit-text-stroke:0.15px">0</div>
<div style="left:854px;top:706px;width:2000px;height:2px;background:#9a9a9a;"></div>
<div style="top:673.67px;font-size:24.5px;line-height:24.5px;color:#1f2d36;font-weight:400;white-space:pre;left:862.5px;transform:scaleX(0.99);transform-origin:left top;-webkit-text-stroke:0.15px">01-11-2019</div>
<div style="top:673.67px;font-size:24.5px;line-height:24.5px;color:#1f2d36;font-weight:400;white-space:pre;left:647.5px;width:600px;text-align:right;-webkit-text-stroke:0.15px">1</div>
<div style="top:673.67px;font-size:24.5px;line-height:24.5px;color:#1f2d36;font-weight:400;white-space:pre;left:887.5px;width:600px;text-align:right;-webkit-text-stroke:0.15px">-7</div>
<div style="top:673.67px;font-size:24.5px;line-height:24.5px;color:#1f2d36;font-weight:400;white-space:pre;left:1127.5px;width:600px;text-align:right;-webkit-text-stroke:0.15px">438.45</div>
<div style="top:673.67px;font-size:24.5px;line-height:24.5px;color:#1f2d36;font-weight:400;white-space:pre;left:1367.5px;width:600px;text-align:right;-webkit-text-stroke:0.15px">430.45</div>
<div style="top:673.67px;font-size:24.5px;line-height:24.5px;color:#1f2d36;font-weight:400;white-space:pre;left:1607.5px;width:600px;text-align:right;-webkit-text-stroke:0.15px">1</div>
<div style="left:854px;top:750px;width:2000px;height:2px;background:#9a9a9a;"></div>
<div style="top:717.67px;font-size:24.5px;line-height:24.5px;color:#1f2d36;font-weight:400;white-space:pre;left:862.5px;transform:scaleX(0.99);transform-origin:left top;-webkit-text-stroke:0.15px">01-13-2020</div>
<div style="top:717.67px;font-size:24.5px;line-height:24.5px;color:#1f2d36;font-weight:400;white-space:pre;left:647.5px;width:600px;text-align:right;-webkit-text-stroke:0.15px">1</div>
<div style="top:717.67px;font-size:24.5px;line-height:24.5px;color:#1f2d36;font-weight:400;white-space:pre;left:887.5px;width:600px;text-align:right;-webkit-text-stroke:0.15px">-7</div>
<div style="top:717.67px;font-size:24.5px;line-height:24.5px;color:#1f2d36;font-weight:400;white-space:pre;left:1127.5px;width:600px;text-align:right;-webkit-text-stroke:0.15px">0</div>
<div style="top:717.67px;font-size:24.5px;line-height:24.5px;color:#1f2d36;font-weight:400;white-space:pre;left:1367.5px;width:600px;text-align:right;-webkit-text-stroke:0.15px">-8</div>
<div style="top:717.67px;font-size:24.5px;line-height:24.5px;color:#1f2d36;font-weight:400;white-space:pre;left:1607.5px;width:600px;text-align:right;-webkit-text-stroke:0.15px">0</div>
<div style="left:854px;top:794px;width:2000px;height:2px;background:#9a9a9a;"></div>
<div style="top:761.67px;font-size:24.5px;line-height:24.5px;color:#1f2d36;font-weight:400;white-space:pre;left:862.5px;transform:scaleX(0.99);transform-origin:left top;-webkit-text-stroke:0.15px">01-17-2020</div>
<div style="top:761.67px;font-size:24.5px;line-height:24.5px;color:#1f2d36;font-weight:400;white-space:pre;left:647.5px;width:600px;text-align:right;-webkit-text-stroke:0.15px">1</div>
<div style="top:761.67px;font-size:24.5px;line-height:24.5px;color:#1f2d36;font-weight:400;white-space:pre;left:887.5px;width:600px;text-align:right;-webkit-text-stroke:0.15px">-7</div>
<div style="top:761.67px;font-size:24.5px;line-height:24.5px;color:#1f2d36;font-weight:400;white-space:pre;left:1127.5px;width:600px;text-align:right;-webkit-text-stroke:0.15px">0</div>
<div style="top:761.67px;font-size:24.5px;line-height:24.5px;color:#1f2d36;font-weight:400;white-space:pre;left:1367.5px;width:600px;text-align:right;-webkit-text-stroke:0.15px">-8</div>
<div style="top:761.67px;font-size:24.5px;line-height:24.5px;color:#1f2d36;font-weight:400;white-space:pre;left:1607.5px;width:600px;text-align:right;-webkit-text-stroke:0.15px">0</div>
<div style="left:854px;top:838px;width:2000px;height:2px;background:#9a9a9a;"></div>
<div style="top:805.67px;font-size:24.5px;line-height:24.5px;color:#1f2d36;font-weight:400;white-space:pre;left:862.5px;transform:scaleX(0.99);transform-origin:left top;-webkit-text-stroke:0.15px">01-20-2018</div>
<div style="top:805.67px;font-size:24.5px;line-height:24.5px;color:#1f2d36;font-weight:400;white-space:pre;left:647.5px;width:600px;text-align:right;-webkit-text-stroke:0.15px">1</div>
<div style="top:805.67px;font-size:24.5px;line-height:24.5px;color:#1f2d36;font-weight:400;white-space:pre;left:887.5px;width:600px;text-align:right;-webkit-text-stroke:0.15px">-7</div>
<div style="top:805.67px;font-size:24.5px;line-height:24.5px;color:#1f2d36;font-weight:400;white-space:pre;left:1127.5px;width:600px;text-align:right;-webkit-text-stroke:0.15px">0</div>
<div style="top:805.67px;font-size:24.5px;line-height:24.5px;color:#1f2d36;font-weight:400;white-space:pre;left:1367.5px;width:600px;text-align:right;-webkit-text-stroke:0.15px">-8</div>
<div style="top:805.67px;font-size:24.5px;line-height:24.5px;color:#1f2d36;font-weight:400;white-space:pre;left:1607.5px;width:600px;text-align:right;-webkit-text-stroke:0.15px">0</div>
<div style="left:854px;top:882px;width:2000px;height:2px;background:#9a9a9a;"></div>
<div style="top:849.67px;font-size:24.5px;line-height:24.5px;color:#1f2d36;font-weight:400;white-space:pre;left:862.5px;transform:scaleX(0.99);transform-origin:left top;-webkit-text-stroke:0.15px">01-20-2020</div>
<div style="top:849.67px;font-size:24.5px;line-height:24.5px;color:#1f2d36;font-weight:400;white-space:pre;left:647.5px;width:600px;text-align:right;-webkit-text-stroke:0.15px">1</div>
<div style="top:849.67px;font-size:24.5px;line-height:24.5px;color:#1f2d36;font-weight:400;white-space:pre;left:887.5px;width:600px;text-align:right;-webkit-text-stroke:0.15px">-7</div>
<div style="top:849.67px;font-size:24.5px;line-height:24.5px;color:#1f2d36;font-weight:400;white-space:pre;left:1127.5px;width:600px;text-align:right;-webkit-text-stroke:0.15px">0</div>
<div style="top:849.67px;font-size:24.5px;line-height:24.5px;color:#1f2d36;font-weight:400;white-space:pre;left:1367.5px;width:600px;text-align:right;-webkit-text-stroke:0.15px">-8</div>
<div style="top:849.67px;font-size:24.5px;line-height:24.5px;color:#1f2d36;font-weight:400;white-space:pre;left:1607.5px;width:600px;text-align:right;-webkit-text-stroke:0.15px">1</div>
<div style="left:854px;top:926px;width:2000px;height:2px;background:#9a9a9a;"></div>
<div style="top:893.67px;font-size:24.5px;line-height:24.5px;color:#1f2d36;font-weight:400;white-space:pre;left:862.5px;transform:scaleX(0.99);transform-origin:left top;-webkit-text-stroke:0.15px">01-24-2020</div>
<div style="top:893.67px;font-size:24.5px;line-height:24.5px;color:#1f2d36;font-weight:400;white-space:pre;left:647.5px;width:600px;text-align:right;-webkit-text-stroke:0.15px">1</div>
<div style="top:893.67px;font-size:24.5px;line-height:24.5px;color:#1f2d36;font-weight:400;white-space:pre;left:887.5px;width:600px;text-align:right;-webkit-text-stroke:0.15px">-7</div>
<div style="top:893.67px;font-size:24.5px;line-height:24.5px;color:#1f2d36;font-weight:400;white-space:pre;left:1127.5px;width:600px;text-align:right;-webkit-text-stroke:0.15px">0</div>
<div style="top:893.67px;font-size:24.5px;line-height:24.5px;color:#1f2d36;font-weight:400;white-space:pre;left:1367.5px;width:600px;text-align:right;-webkit-text-stroke:0.15px">-8</div>
<div style="top:893.67px;font-size:24.5px;line-height:24.5px;color:#1f2d36;font-weight:400;white-space:pre;left:1607.5px;width:600px;text-align:right;-webkit-text-stroke:0.15px">1</div>
<div style="left:854px;top:970px;width:2000px;height:2px;background:#9a9a9a;"></div>
<div style="top:937.67px;font-size:24.5px;line-height:24.5px;color:#1f2d36;font-weight:400;white-space:pre;left:862.5px;transform:scaleX(0.99);transform-origin:left top;-webkit-text-stroke:0.15px">01-27-2020</div>
<div style="top:937.67px;font-size:24.5px;line-height:24.5px;color:#1f2d36;font-weight:400;white-space:pre;left:647.5px;width:600px;text-align:right;-webkit-text-stroke:0.15px">1</div>
<div style="top:937.67px;font-size:24.5px;line-height:24.5px;color:#1f2d36;font-weight:400;white-space:pre;left:887.5px;width:600px;text-align:right;-webkit-text-stroke:0.15px">-7</div>
<div style="top:937.67px;font-size:24.5px;line-height:24.5px;color:#1f2d36;font-weight:400;white-space:pre;left:1127.5px;width:600px;text-align:right;-webkit-text-stroke:0.15px">0</div>
<div style="top:937.67px;font-size:24.5px;line-height:24.5px;color:#1f2d36;font-weight:400;white-space:pre;left:1367.5px;width:600px;text-align:right;-webkit-text-stroke:0.15px">-8</div>
<div style="top:937.67px;font-size:24.5px;line-height:24.5px;color:#1f2d36;font-weight:400;white-space:pre;left:1607.5px;width:600px;text-align:right;-webkit-text-stroke:0.15px">1</div>
<div style="left:854px;top:1014px;width:2000px;height:2px;background:#9a9a9a;"></div>
<div style="top:981.67px;font-size:24.5px;line-height:24.5px;color:#1f2d36;font-weight:400;white-space:pre;left:862.5px;transform:scaleX(0.99);transform-origin:left top;-webkit-text-stroke:0.15px">01-29-2019</div>
<div style="top:981.67px;font-size:24.5px;line-height:24.5px;color:#1f2d36;font-weight:400;white-space:pre;left:647.5px;width:600px;text-align:right;-webkit-text-stroke:0.15px">0.75</div>
<div style="top:981.67px;font-size:24.5px;line-height:24.5px;color:#1f2d36;font-weight:400;white-space:pre;left:887.5px;width:600px;text-align:right;-webkit-text-stroke:0.15px">-7.25</div>
<div style="top:981.67px;font-size:24.5px;line-height:24.5px;color:#1f2d36;font-weight:400;white-space:pre;left:1127.5px;width:600px;text-align:right;-webkit-text-stroke:0.15px">21.07</div>
<div style="top:981.67px;font-size:24.5px;line-height:24.5px;color:#1f2d36;font-weight:400;white-space:pre;left:1367.5px;width:600px;text-align:right;-webkit-text-stroke:0.15px">13.07</div>
<div style="top:981.67px;font-size:24.5px;line-height:24.5px;color:#1f2d36;font-weight:400;white-space:pre;left:1607.5px;width:600px;text-align:right;-webkit-text-stroke:0.15px">0.75</div>
<div style="left:854px;top:1058px;width:2000px;height:2px;background:#9a9a9a;"></div>
<div style="top:1025.67px;font-size:24.5px;line-height:24.5px;color:#1f2d36;font-weight:400;white-space:pre;left:862.5px;transform:scaleX(0.99);transform-origin:left top;-webkit-text-stroke:0.15px">01-31-2020</div>
<div style="top:1025.67px;font-size:24.5px;line-height:24.5px;color:#1f2d36;font-weight:400;white-space:pre;left:647.5px;width:600px;text-align:right;-webkit-text-stroke:0.15px">1</div>
<div style="top:1025.67px;font-size:24.5px;line-height:24.5px;color:#1f2d36;font-weight:400;white-space:pre;left:887.5px;width:600px;text-align:right;-webkit-text-stroke:0.15px">-7</div>
<div style="top:1025.67px;font-size:24.5px;line-height:24.5px;color:#1f2d36;font-weight:400;white-space:pre;left:1127.5px;width:600px;text-align:right;-webkit-text-stroke:0.15px">0</div>
<div style="top:1025.67px;font-size:24.5px;line-height:24.5px;color:#1f2d36;font-weight:400;white-space:pre;left:1367.5px;width:600px;text-align:right;-webkit-text-stroke:0.15px">-8</div>
<div style="top:1025.67px;font-size:24.5px;line-height:24.5px;color:#1f2d36;font-weight:400;white-space:pre;left:1607.5px;width:600px;text-align:right;-webkit-text-stroke:0.15px">0</div>
<div style="left:854px;top:1102px;width:2000px;height:2px;background:#9a9a9a;"></div>
<div style="top:1069.67px;font-size:24.5px;line-height:24.5px;color:#1f2d36;font-weight:400;white-space:pre;left:862.5px;transform:scaleX(0.99);transform-origin:left top;-webkit-text-stroke:0.15px">02-03-2020</div>
<div style="top:1069.67px;font-size:24.5px;line-height:24.5px;color:#1f2d36;font-weight:400;white-space:pre;left:647.5px;width:600px;text-align:right;-webkit-text-stroke:0.15px">1</div>
<div style="top:1069.67px;font-size:24.5px;line-height:24.5px;color:#1f2d36;font-weight:400;white-space:pre;left:887.5px;width:600px;text-align:right;-webkit-text-stroke:0.15px">-7</div>
<div style="top:1069.67px;font-size:24.5px;line-height:24.5px;color:#1f2d36;font-weight:400;white-space:pre;left:1127.5px;width:600px;text-align:right;-webkit-text-stroke:0.15px">0</div>
<div style="top:1069.67px;font-size:24.5px;line-height:24.5px;color:#1f2d36;font-weight:400;white-space:pre;left:1367.5px;width:600px;text-align:right;-webkit-text-stroke:0.15px">-8</div>
<div style="top:1069.67px;font-size:24.5px;line-height:24.5px;color:#1f2d36;font-weight:400;white-space:pre;left:1607.5px;width:600px;text-align:right;-webkit-text-stroke:0.15px">0</div>
<div style="left:854px;top:1146px;width:2000px;height:2px;background:#9a9a9a;"></div>
<div style="top:1113.67px;font-size:24.5px;line-height:24.5px;color:#1f2d36;font-weight:400;white-space:pre;left:862.5px;transform:scaleX(0.99);transform-origin:left top;-webkit-text-stroke:0.15px">02-07-2020</div>
<div style="top:1113.67px;font-size:24.5px;line-height:24.5px;color:#1f2d36;font-weight:400;white-space:pre;left:647.5px;width:600px;text-align:right;-webkit-text-stroke:0.15px">1</div>
<div style="top:1113.67px;font-size:24.5px;line-height:24.5px;color:#1f2d36;font-weight:400;white-space:pre;left:887.5px;width:600px;text-align:right;-webkit-text-stroke:0.15px">-7</div>
<div style="top:1113.67px;font-size:24.5px;line-height:24.5px;color:#1f2d36;font-weight:400;white-space:pre;left:1127.5px;width:600px;text-align:right;-webkit-text-stroke:0.15px">0</div>
<div style="top:1113.67px;font-size:24.5px;line-height:24.5px;color:#1f2d36;font-weight:400;white-space:pre;left:1367.5px;width:600px;text-align:right;-webkit-text-stroke:0.15px">-8</div>
<div style="top:1113.67px;font-size:24.5px;line-height:24.5px;color:#1f2d36;font-weight:400;white-space:pre;left:1607.5px;width:600px;text-align:right;-webkit-text-stroke:0.15px">0</div>
<div style="left:854px;top:1190px;width:2000px;height:2px;background:#9a9a9a;"></div>
<div style="top:1157.67px;font-size:24.5px;line-height:24.5px;color:#1f2d36;font-weight:400;white-space:pre;left:862.5px;transform:scaleX(0.99);transform-origin:left top;-webkit-text-stroke:0.15px">02-10-2020</div>
<div style="top:1157.67px;font-size:24.5px;line-height:24.5px;color:#1f2d36;font-weight:400;white-space:pre;left:647.5px;width:600px;text-align:right;-webkit-text-stroke:0.15px">1</div>
<div style="top:1157.67px;font-size:24.5px;line-height:24.5px;color:#1f2d36;font-weight:400;white-space:pre;left:887.5px;width:600px;text-align:right;-webkit-text-stroke:0.15px">-7</div>
<div style="top:1157.67px;font-size:24.5px;line-height:24.5px;color:#1f2d36;font-weight:400;white-space:pre;left:1127.5px;width:600px;text-align:right;-webkit-text-stroke:0.15px">0</div>
<div style="top:1157.67px;font-size:24.5px;line-height:24.5px;color:#1f2d36;font-weight:400;white-space:pre;left:1367.5px;width:600px;text-align:right;-webkit-text-stroke:0.15px">-8</div>
<div style="top:1157.67px;font-size:24.5px;line-height:24.5px;color:#1f2d36;font-weight:400;white-space:pre;left:1607.5px;width:600px;text-align:right;-webkit-text-stroke:0.15px">0</div>
<div style="left:854px;top:1234px;width:2000px;height:2px;background:#9a9a9a;"></div>
<div style="top:1201.67px;font-size:24.5px;line-height:24.5px;color:#1f2d36;font-weight:400;white-space:pre;left:862.5px;transform:scaleX(0.99);transform-origin:left top;-webkit-text-stroke:0.15px">02-13-2018</div>
<div style="top:1201.67px;font-size:24.5px;line-height:24.5px;color:#1f2d36;font-weight:400;white-space:pre;left:647.5px;width:600px;text-align:right;-webkit-text-stroke:0.15px">0.75</div>
<div style="top:1201.67px;font-size:24.5px;line-height:24.5px;color:#1f2d36;font-weight:400;white-space:pre;left:887.5px;width:600px;text-align:right;-webkit-text-stroke:0.15px">-7.25</div>
<div style="top:1201.67px;font-size:24.5px;line-height:24.5px;color:#1f2d36;font-weight:400;white-space:pre;left:1127.5px;width:600px;text-align:right;-webkit-text-stroke:0.15px">0</div>
<div style="top:1201.67px;font-size:24.5px;line-height:24.5px;color:#1f2d36;font-weight:400;white-space:pre;left:1367.5px;width:600px;text-align:right;-webkit-text-stroke:0.15px">-8</div>
<div style="top:1201.67px;font-size:24.5px;line-height:24.5px;color:#1f2d36;font-weight:400;white-space:pre;left:1607.5px;width:600px;text-align:right;-webkit-text-stroke:0.15px">0</div>
<div style="left:854px;top:1278px;width:2000px;height:2px;background:#9a9a9a;"></div>
<div style="top:1245.67px;font-size:24.5px;line-height:24.5px;color:#1f2d36;font-weight:400;white-space:pre;left:862.5px;transform:scaleX(0.99);transform-origin:left top;-webkit-text-stroke:0.15px">02-14-2020</div>
<div style="top:1245.67px;font-size:24.5px;line-height:24.5px;color:#1f2d36;font-weight:400;white-space:pre;left:647.5px;width:600px;text-align:right;-webkit-text-stroke:0.15px">1</div>
<div style="top:1245.67px;font-size:24.5px;line-height:24.5px;color:#1f2d36;font-weight:400;white-space:pre;left:887.5px;width:600px;text-align:right;-webkit-text-stroke:0.15px">-7</div>
<div style="top:1245.67px;font-size:24.5px;line-height:24.5px;color:#1f2d36;font-weight:400;white-space:pre;left:1127.5px;width:600px;text-align:right;-webkit-text-stroke:0.15px">0</div>
<div style="top:1245.67px;font-size:24.5px;line-height:24.5px;color:#1f2d36;font-weight:400;white-space:pre;left:1367.5px;width:600px;text-align:right;-webkit-text-stroke:0.15px">-8</div>
<div style="top:1245.67px;font-size:24.5px;line-height:24.5px;color:#1f2d36;font-weight:400;white-space:pre;left:1607.5px;width:600px;text-align:right;-webkit-text-stroke:0.15px">0</div>
<div style="left:854px;top:1322px;width:2000px;height:2px;background:#9a9a9a;"></div>
<div style="top:1289.67px;font-size:24.5px;line-height:24.5px;color:#1f2d36;font-weight:400;white-space:pre;left:862.5px;transform:scaleX(0.99);transform-origin:left top;-webkit-text-stroke:0.15px">02-17-2020</div>
<div style="top:1289.67px;font-size:24.5px;line-height:24.5px;color:#1f2d36;font-weight:400;white-space:pre;left:647.5px;width:600px;text-align:right;-webkit-text-stroke:0.15px">1</div>
<div style="top:1289.67px;font-size:24.5px;line-height:24.5px;color:#1f2d36;font-weight:400;white-space:pre;left:887.5px;width:600px;text-align:right;-webkit-text-stroke:0.15px">-7</div>
<div style="top:1289.67px;font-size:24.5px;line-height:24.5px;color:#1f2d36;font-weight:400;white-space:pre;left:1127.5px;width:600px;text-align:right;-webkit-text-stroke:0.15px">0</div>
<div style="top:1289.67px;font-size:24.5px;line-height:24.5px;color:#1f2d36;font-weight:400;white-space:pre;left:1367.5px;width:600px;text-align:right;-webkit-text-stroke:0.15px">-8</div>
<div style="top:1289.67px;font-size:24.5px;line-height:24.5px;color:#1f2d36;font-weight:400;white-space:pre;left:1607.5px;width:600px;text-align:right;-webkit-text-stroke:0.15px">0</div>
<div style="left:854px;top:1366px;width:2000px;height:2px;background:#9a9a9a;"></div>
<div style="top:1333.67px;font-size:24.5px;line-height:24.5px;color:#1f2d36;font-weight:400;white-space:pre;left:862.5px;transform:scaleX(0.99);transform-origin:left top;-webkit-text-stroke:0.15px">02-21-2020</div>
<div style="top:1333.67px;font-size:24.5px;line-height:24.5px;color:#1f2d36;font-weight:400;white-space:pre;left:647.5px;width:600px;text-align:right;-webkit-text-stroke:0.15px">1</div>
<div style="top:1333.67px;font-size:24.5px;line-height:24.5px;color:#1f2d36;font-weight:400;white-space:pre;left:887.5px;width:600px;text-align:right;-webkit-text-stroke:0.15px">-7</div>
<div style="top:1333.67px;font-size:24.5px;line-height:24.5px;color:#1f2d36;font-weight:400;white-space:pre;left:1127.5px;width:600px;text-align:right;-webkit-text-stroke:0.15px">0</div>
<div style="top:1333.67px;font-size:24.5px;line-height:24.5px;color:#1f2d36;font-weight:400;white-space:pre;left:1367.5px;width:600px;text-align:right;-webkit-text-stroke:0.15px">-8</div>
<div style="top:1333.67px;font-size:24.5px;line-height:24.5px;color:#1f2d36;font-weight:400;white-space:pre;left:1607.5px;width:600px;text-align:right;-webkit-text-stroke:0.15px">0</div>
<div style="left:854px;top:1410px;width:2000px;height:2px;background:#9a9a9a;"></div>
<div style="top:1377.67px;font-size:24.5px;line-height:24.5px;color:#1f2d36;font-weight:400;white-space:pre;left:862.5px;transform:scaleX(0.99);transform-origin:left top;-webkit-text-stroke:0.15px">02-24-2020</div>
<div style="top:1377.67px;font-size:24.5px;line-height:24.5px;color:#1f2d36;font-weight:400;white-space:pre;left:647.5px;width:600px;text-align:right;-webkit-text-stroke:0.15px">1</div>
<div style="top:1377.67px;font-size:24.5px;line-height:24.5px;color:#1f2d36;font-weight:400;white-space:pre;left:887.5px;width:600px;text-align:right;-webkit-text-stroke:0.15px">-7</div>
<div style="top:1377.67px;font-size:24.5px;line-height:24.5px;color:#1f2d36;font-weight:400;white-space:pre;left:1127.5px;width:600px;text-align:right;-webkit-text-stroke:0.15px">0</div>
<div style="top:1377.67px;font-size:24.5px;line-height:24.5px;color:#1f2d36;font-weight:400;white-space:pre;left:1367.5px;width:600px;text-align:right;-webkit-text-stroke:0.15px">-8</div>
<div style="top:1377.67px;font-size:24.5px;line-height:24.5px;color:#1f2d36;font-weight:400;white-space:pre;left:1607.5px;width:600px;text-align:right;-webkit-text-stroke:0.15px">0</div>
</div>
<svg style="left:0;top:0" width="2336" height="1376"><ellipse cx="1648.5" cy="178" rx="177.5" ry="38" fill="none" stroke="#fc2a1c" stroke-width="4.6"/><ellipse cx="2202.8" cy="178.2" rx="79.8" ry="37.8" fill="none" stroke="#fc2a1c" stroke-width="4.6"/><ellipse cx="86.2" cy="471.5" rx="31.5" ry="33.7" fill="none" stroke="#fc2a1c" stroke-width="3.5"/><ellipse cx="216.8" cy="1281" rx="177.4" ry="38.2" fill="none" stroke="#fc2a1c" stroke-width="3.5"/><line x1="591" y1="1033.5" x2="141.5" y2="533.0" stroke="#fc2a1c" stroke-width="10" stroke-linecap="butt"/><polygon points="112,501 164,521 127,554" fill="#fc2a1c"/><line x1="575" y1="1023" x2="419.9" y2="1232.5" stroke="#fc2a1c" stroke-width="10" stroke-linecap="butt"/><polygon points="394,1268 403.6,1213 443.3,1242.4" fill="#fc2a1c"/><line x1="1891.8" y1="639.4" x2="1718.7" y2="264.1" stroke="#fc2a1c" stroke-width="10" stroke-linecap="butt"/><polygon points="1700,224 1743.1,258.4 1698.2,279.7" fill="#fc2a1c"/><line x1="1877.2" y1="628.7" x2="2148.3" y2="254.4" stroke="#fc2a1c" stroke-width="10" stroke-linecap="butt"/><polygon points="2173.9,219 2124.9,244.7 2164.7,273.9" fill="#fc2a1c"/></svg>
</body></html>
